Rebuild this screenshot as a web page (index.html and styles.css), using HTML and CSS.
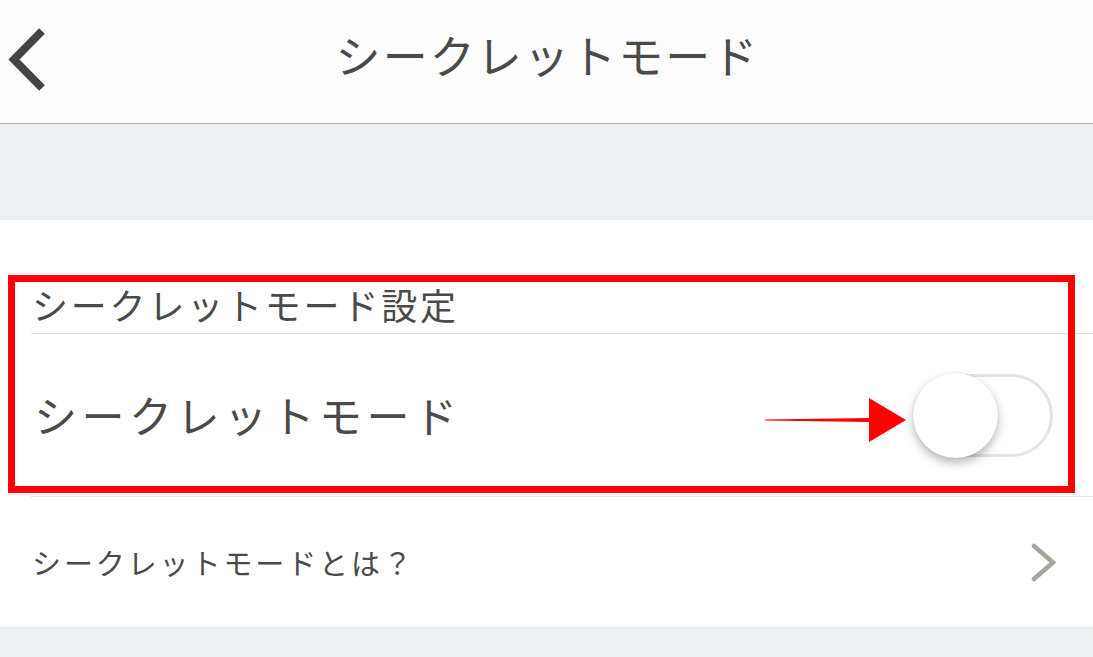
FILE: index.html
```html
<!DOCTYPE html>
<html lang="ja">
<head>
<meta charset="utf-8">
<title>シークレットモード</title>
<link rel="stylesheet" href="styles.css">
</head>
<body>
<div class="page">
  <header class="navbar">
    <div class="nav-back">
      <svg width="50" height="70" viewBox="0 0 50 70">
        <polyline points="39,3 11,31.5 39,60" fill="none" stroke="#444" stroke-width="8" stroke-linejoin="miter"/>
      </svg>
    </div>
    <h1 class="nav-title">シークレットモード</h1>
    <div class="nav-right"></div>
  </header>
  <div class="gap-band"></div>
  <section class="group">
    <div class="group-head"><span>シークレットモード設定</span></div>
    <div class="row row-main">
      <span class="row-label">シークレットモード</span>
      <div class="toggle"><div class="knob"></div></div>
    </div>
    <div class="row row-link">
      <span class="link-label">シークレットモードとは？</span>
      <svg class="chev" width="28" height="40" viewBox="0 0 28 40">
        <polyline points="3,3 22,19.5 3,36" fill="none" stroke="#a9a49c" stroke-width="4.5" stroke-linecap="round" stroke-linejoin="miter"/>
      </svg>
    </div>
  </section>
  <div class="bottom-band"></div>

  <div class="annot-box"></div>
  <svg class="annot-arrow" width="150" height="50" viewBox="0 0 150 50">
    <polygon points="5,23.5 110,22 110,26 5,24.5" fill="#ff0000"/>
    <polygon points="109,2 146,24 109,46" fill="#ff0000"/>
  </svg>
</div>
</body>
</html>
```

FILE: styles.css
```css
* { box-sizing: border-box; }
html, body { margin: 0; padding: 0; }
body {
  font-family: "Noto Sans CJK JP", "Noto Sans", sans-serif;
  color: #4a4a4a;
  background: #edf0f1;
}
.page {
  position: relative;
  width: 1093px;
  height: 657px;
  overflow: hidden;
  background: #edf0f1;
}
.navbar {
  height: 124px;
  background: #fdfdfd;
  border-bottom: 1px solid #b4b4b4;
  display: grid;
  grid-template-columns: 160px 1fr 160px;
  align-items: center;
}
.nav-back {
  padding-left: 3px;
  padding-top: 2px;
  display: flex;
  align-items: center;
}
.nav-title {
  margin: 0;
  text-align: center;
  font-weight: 400;
  font-size: 45px;
  letter-spacing: 2.1px;
  line-height: 1;
  color: #4a4a4a;
  padding-bottom: 14px;
  padding-left: 2px;
}
.gap-band {
  height: 96px;
  background: #edf0f1;
}
.group {
  background: #ffffff;
}
.group-head {
  height: 114px;
  margin-left: 31px;
  border-bottom: 1px solid #e2e2e2;
  display: flex;
  align-items: flex-end;
  padding-left: 1px;
  padding-bottom: 4px;
}
.group-head span {
  font-size: 36px;
  letter-spacing: 2.8px;
  line-height: 50px;
}
.row {
  display: flex;
  align-items: center;
  justify-content: space-between;
  margin-left: 31px;
  padding-left: 3px;
}
.row-main {
  height: 163px;
  border-bottom: 1px solid #e2e2e2;
  padding-right: 40px;
}
.row-label {
  font-size: 43px;
  letter-spacing: 4.5px;
  line-height: 1;
  padding-bottom: 1px;
}
.toggle {
  position: relative;
  width: 140px;
  height: 83px;
  border: 3px solid #e4e4e4;
  border-radius: 42px;
  background: #fff;
}
.knob {
  position: absolute;
  left: -3px;
  top: -4px;
  width: 85px;
  height: 85px;
  border-radius: 50%;
  background: #fff;
  box-shadow: 0 5px 10px rgba(0, 0, 0, 0.28), 0 0 2px rgba(0, 0, 0, 0.08);
}
.row-link {
  height: 131px;
  border-bottom: 1px solid #e3e6e7;
  margin-left: 0;
  padding-left: 32px;
  padding-right: 34px;
}
.link-label {
  font-size: 29px;
  letter-spacing: 2.9px;
  line-height: 1;
}
.chev { display: block; margin-top: 2px; }
.bottom-band {
  height: 40px;
  background: #edf0f1;
}
.annot-box {
  position: absolute;
  left: 8px;
  top: 275px;
  width: 1067px;
  height: 218px;
  border: 7px solid #ff0000;
  pointer-events: none;
}
.annot-arrow {
  position: absolute;
  left: 760px;
  top: 396px;
}
```
